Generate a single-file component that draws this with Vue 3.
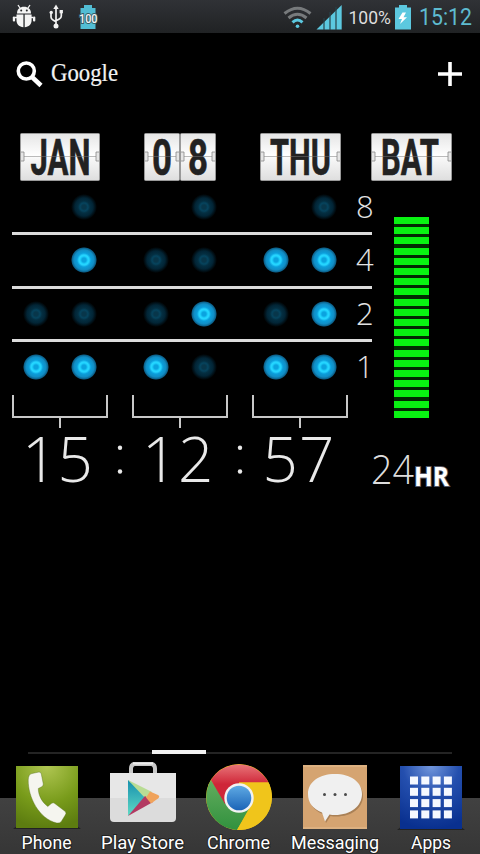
<template>
  <div class="screen">
    <header class="status-bar">
      <svg class="status-icons" width="110" height="33" viewBox="0 0 110 33">
        <g fill="#f4f4f4">
          <path d="M17 13.500c0-4.500 3-6.700 7-6.700s7 2.200 7 6.700z" />
          <path d="M16.500 14.500h6.900v12.800c-4-.3-6.900-3-6.900-7zM24.700 14.500h6.900v5.800c0 4-2.900 6.700-6.900 7z" />
          <rect x="12.800" y="16.500" width="2.300" height="5" rx="1" />
          <rect x="33" y="16.500" width="2.300" height="5" rx="1" />
        </g>
        <path d="M20 8l-2-3M28 8l2-3M15 17.500h3M30 17.500h3" stroke="#f4f4f4" stroke-width="1.300" />
        <circle cx="21.200" cy="10.500" r="1" fill="#26282a" /><circle cx="26.800" cy="10.500" r="1" fill="#26282a" />
        <g fill="none" stroke="#f2f2f2" stroke-width="1.700">
          <path d="M56 8v17M51 13v4q0 2 2 3l3 1.800M61.300 12v4q0 2-2 3l-3.300 1.800" />
        </g>
        <g fill="#f2f2f2">
          <path d="M56 4.500l2.700 4.500h-5.400z" /><circle cx="51.200" cy="12.500" r="1.700" />
          <rect x="59.600" y="10" width="3.300" height="3.300" /><circle cx="56" cy="26" r="2.500" />
        </g>
        <path d="M84 5h8v3h3.500v21h-15V8H84z" fill="#52bdd4" />
        <text x="79" y="22.700" textLength="18.500" lengthAdjust="spacingAndGlyphs" class="tiny">100</text>
      </svg>
      <svg class="status-icons" width="200" height="33" viewBox="280 0 200 33">
        <g fill="none" stroke-width="3">
          <path d="M284.500 13.500q13-10.500 26 0" stroke="#777a7c" />
          <path d="M288.500 18q9-7.500 18 0" stroke="#777a7c" />
          <path d="M292.500 22.300q5-4.500 10 0" stroke="#5cc8df" />
        </g>
        <circle cx="297.500" cy="26.300" r="1.800" fill="#5cc8df" />
        <path d="M316.500 29.500L341.700 5v24.500z" fill="#5cc8df" />
        <path d="M324 18v12M330 12v18M336 7v23" stroke="#27414a" stroke-width="1.200" />
        <text x="348.500" y="23.700" textLength="42.500" lengthAdjust="spacingAndGlyphs" class="percent">100%</text>
        <path d="M399 5h8v2.500h4v22h-16v-22h4z" fill="#5cc8df" />
        <path d="M402.500 12.500l-4 6.500h3.500l-2 5 7-6.700h-3.500l2.500-4.800z" fill="#fff" />
        <text x="419" y="24.800" textLength="53" lengthAdjust="spacingAndGlyphs" class="clock-text">15:12</text>
      </svg>
    </header>

    <div class="search">
      <svg width="120" height="36" viewBox="12 56 120 36">
        <circle cx="26.300" cy="71" r="8" fill="none" stroke="#fff" stroke-width="3.600" />
        <path d="M32 77l9 8.500" stroke="#fff" stroke-width="4.500" />
        <text x="51" y="80.500" textLength="67" lengthAdjust="spacingAndGlyphs" class="google">Google</text>
      </svg>
      <svg width="24" height="24" viewBox="0 0 24 24">
        <path d="M0 12h24M12 0v24" stroke="#fff" stroke-width="3.600" />
      </svg>
    </div>

    <main class="widget">
      <div class="cards">
        <div v-for="card in cards" :key="card.name" class="card" :class="card.name">
          <svg v-for="face in card.faces" :key="face.text" :width="face.width" height="48" :viewBox="`0 0 ${face.width} 48`">
            <defs>
              <linearGradient id="paper" x2="0" y2="1">
                <stop offset="0" stop-color="#e5e5e5" /><stop offset=".48" stop-color="#fff" />
                <stop offset=".52" stop-color="#f8f8f8" /><stop offset="1" stop-color="#dedede" />
              </linearGradient>
            </defs>
            <rect x=".5" y=".5" :width="face.width - 1" height="47" rx="1" fill="url(#paper)" stroke="#999" />
            <text :x="face.x" y="42" :textLength="face.length" lengthAdjust="spacingAndGlyphs" class="flip">{{ face.text }}</text>
            <path :d="`M1 23.500H${face.width - 1}`" stroke="#777" stroke-opacity=".5" />
            <path :d="`M1 19h3v9h-3M${face.width - 1} 19h-3v9h3`" fill="#e5e5e5" stroke="#888" stroke-width=".8" />
          </svg>
        </div>
      </div>

      <div class="body">
        <section class="binary">
          <div v-for="row in rows" :key="row.value" class="row">
            <span v-for="(state, i) in row.dots" :key="i" class="cell">
              <i v-if="state !== '-'" class="dot" :class="{ on: state === '1' }"></i>
            </span>
            <svg class="weight" width="18" height="30" viewBox="0 0 18 30">
              <text x="0" y="26">{{ row.value }}</text>
            </svg>
          </div>

          <div class="brackets">
            <div v-for="n in 3" :key="n" class="bracket"></div>
          </div>
          <svg class="time" width="348" height="64" viewBox="0 427 348 64">
            <text v-for="digit in digits" :key="digit.x" :x="digit.x" y="481.500">{{ digit.text }}</text>
            <g fill="#e8e8e8">
              <circle cx="120" cy="447.700" r="2.200" /><circle cx="120" cy="471.500" r="2.200" />
              <circle cx="240" cy="447.700" r="2.200" /><circle cx="240" cy="471.500" r="2.200" />
            </g>
          </svg>
        </section>

        <section class="battery">
          <div class="bars"><i v-for="n in 20" :key="n"></i></div>
          <svg width="86" height="44" viewBox="370 449 86 44">
            <text x="371" y="483.500" textLength="43" lengthAdjust="spacingAndGlyphs" class="hours">24</text>
            <text x="414" y="485.500" textLength="35" lengthAdjust="spacingAndGlyphs" class="hr">HR</text>
          </svg>
        </section>
      </div>
    </main>

    <div class="pager"><span></span></div>

    <nav class="dock">
      <div class="app">
        <svg width="72" height="70" viewBox="0 0 72 70">
          <defs>
            <radialGradient id="green" cx=".5" cy="0" r="1">
              <stop offset="0" stop-color="#b0c652" /><stop offset=".6" stop-color="#789b1a" /><stop offset="1" stop-color="#5d7d10" />
            </radialGradient>
          </defs>
          <path d="M2 68l5-4h58l5 4z" fill="#222" />
          <rect x="5" y="5" width="62" height="62" fill="url(#green)" />
          <path d="M21 12.500l7-1.500q2 0 2.300 2l2 10q.2 2-2 3l-3 1.500c0 7 4 14 9.500 18l3.500-3q2-1.500 3.500 0l10.500 8q1.500 1.500 0 3.500l-4 6.500q-1.500 2-4.500 1.500C28 58 17 36 17.200 19q.2-6 3.800-6.500z" fill="#f5f5ef" stroke="#526f18" stroke-opacity=".4" />
        </svg>
        <svg class="label" width="96" height="28"><text x="22.500" y="21" textLength="50" lengthAdjust="spacingAndGlyphs">Phone</text></svg>
      </div>
      <div class="app">
        <svg width="72" height="70" viewBox="0 0 72 70">
          <defs>
            <linearGradient id="teal" x2="0" y2="1"><stop offset="0" stop-color="#168fae" /><stop offset="1" stop-color="#61dbc5" /></linearGradient>
          </defs>
          <path d="M24 13V7.500q0-3.500 3-4.500h18q3 1 3 4.500V13" fill="none" stroke="#c8c8c8" stroke-width="4" />
          <path d="M26 2.500h20" stroke="#eee" stroke-width="2" />
          <path d="M3 12h66v45q0 4-4 4H7q-4 0-4-4z" fill="#dcdcdc" />
          <path d="M3 12h66v25H3z" fill="#e7e7e7" />
          <path d="M21 19v36l20-20z" fill="url(#teal)" />
          <path d="M21 19l24 12-6 7z" fill="#b9dc94" />
          <path d="M21 55l25-14-8-6z" fill="#b23a62" />
          <path d="M43 30.500l8 3.500q2.500 1.500 0 3.500l-7 5-5-6z" fill="#f0a35b" />
        </svg>
        <svg class="label" width="96" height="28"><text x="6" y="21" textLength="83" lengthAdjust="spacingAndGlyphs">Play Store</text></svg>
      </div>
      <div class="app">
        <svg width="72" height="70" viewBox="0 0 72 70">
          <defs>
            <linearGradient id="red" x2="0" y2="1"><stop offset="0" stop-color="#e87579" /><stop offset=".5" stop-color="#cf2638" /></linearGradient>
            <linearGradient id="leaf" x2="0" y2="1"><stop offset="0" stop-color="#63ad5e" /><stop offset="1" stop-color="#31913e" /></linearGradient>
            <linearGradient id="blue" x2="0" y2="1"><stop offset="0" stop-color="#5faae4" /><stop offset="1" stop-color="#1b64b7" /></linearGradient>
          </defs>
          <circle cx="36" cy="36" r="33" fill="#f0c51b" />
          <path d="M8 19A33 33 0 0 0 34 69L48 44 36 36 24 43z" fill="url(#leaf)" />
          <path d="M8 19L22 43 36 36V21.500H65.500A33 33 0 0 0 8 19z" fill="url(#red)" />
          <path d="M36 21.500h29.500A33 33 0 0 1 34 69l15-25z" fill="#f0c51b" />
          <circle cx="36" cy="37" r="14.700" fill="#f2f2f2" />
          <circle cx="36" cy="37" r="12.300" fill="url(#blue)" />
        </svg>
        <svg class="label" width="96" height="28"><text x="16" y="21" textLength="63" lengthAdjust="spacingAndGlyphs">Chrome</text></svg>
      </div>
      <div class="app">
        <svg width="72" height="70" viewBox="0 0 72 70">
          <rect x="4" y="4" width="64" height="64" fill="#d5a471" />
          <path d="M4 5h64M4 67h64" stroke="#e4bd91" stroke-width="1" />
          <path d="M36 14c16 0 27 8 27 20S52 54.500 36 54.500q-3 0-5.500-.5L26 61l-3-9Q9.500 47 9.500 34C9.500 22 20 14 36 14z" transform="translate(1 1)" fill="#805d3b" opacity=".5" />
          <path d="M36 13c16 0 27 8 27 20S52 54 36 54q-3 0-5.500-.5L26 60.500l-3-9Q9 46 9 33C9 21 20 13 36 13z" fill="#f0f0f0" />
          <g fill="#4a4a4a"><circle cx="25.500" cy="33.500" r="1.500" /><circle cx="36" cy="33.500" r="1.500" /><circle cx="46.500" cy="33.500" r="1.500" /></g>
        </svg>
        <svg class="label" width="96" height="28"><text x="4" y="21" textLength="88" lengthAdjust="spacingAndGlyphs">Messaging</text></svg>
      </div>
      <div class="app">
        <svg width="72" height="70" viewBox="0 0 72 70">
          <defs>
            <radialGradient id="navy" cx=".5" cy="0" r="1">
              <stop offset="0" stop-color="#7196dc" /><stop offset=".45" stop-color="#244fae" /><stop offset="1" stop-color="#09308f" />
            </radialGradient>
          </defs>
          <path d="M2 69l5-4h58l5 4z" fill="#222" />
          <rect x="5" y="5" width="62" height="63" fill="url(#navy)" />
          <g fill="#f5f8ff">
            <rect v-for="n in 16" :key="n" :x="15 + ((n - 1) % 4) * 11.300" :y="15.500 + Math.floor((n - 1) / 4) * 11.300" width="8" height="8" />
          </g>
        </svg>
        <svg class="label" width="96" height="28"><text x="28" y="21" textLength="40" lengthAdjust="spacingAndGlyphs">Apps</text></svg>
      </div>
    </nav>
  </div>
</template>

<script setup>
const cards = [
  { name: 'month', faces: [{ text: 'JAN', width: 80, x: 10.5, length: 60 }] },
  { name: 'day', faces: [{ text: '0', width: 36, x: 8, length: 20 }, { text: '8', width: 36, x: 8, length: 20 }] },
  { name: 'weekday', faces: [{ text: 'THU', width: 81, x: 10, length: 61 }] },
  { name: 'bat', faces: [{ text: 'BAT', width: 81, x: 10, length: 58 }] },
];

// '-' leaves the position empty, 0 is an unlit dot
const rows = [
  { value: 8, dots: '-0-0-0' },
  { value: 4, dots: '-10011' },
  { value: 2, dots: '000101' },
  { value: 1, dots: '111011' },
];

const digits = [
  { text: '1', x: 22 },
  { text: '5', x: 57.5 },
  { text: '1', x: 142 },
  { text: '2', x: 178 },
  { text: '5', x: 262.5 },
  { text: '7', x: 299 },
];
</script>

<style>
body { background: #000; overflow: hidden; }
</style>

<style scoped>
.screen { width: 480px; height: 854px; display: flex; flex-direction: column; background: #000; font-family: Roboto, sans-serif; overflow: hidden; }
svg { display: block; flex-shrink: 0; overflow: visible; }
.status-bar { height: 33px; display: flex; justify-content: space-between; background: linear-gradient(#303236, #202224); flex-shrink: 0; }
.tiny { font: 500 12px Roboto, sans-serif; fill: #f4f4f4; stroke: #355b64; stroke-width: 2px; paint-order: stroke; }
.percent { font-size: 18.5px; fill: #dedede; }
.clock-text { font-size: 23px; fill: #5ebbd0; }
.search { height: 100px; box-sizing: border-box; padding: 23px 18px 0 12px; display: flex; justify-content: space-between; flex-shrink: 0; }
.search svg:last-child { margin-top: 6px; }
.google { font: 25px "Liberation Serif", serif; fill: #f2f2f2; stroke: #f2f2f2; stroke-width: .2px; }

.widget { height: 367px; flex-shrink: 0; }
.cards { display: flex; padding-left: 20px; height: 48px; }
.card { display: flex; }
.card.day { margin-left: 44px; }
.card.weekday { margin-left: 44px; }
.card.bat { margin-left: 30px; }
.flip { font: bold 50px Roboto, sans-serif; fill: #222; stroke: #222; stroke-width: .6px; }
.body { display: flex; padding: 1px 0 0 12px; }
.binary { width: 361px; }
.row { height: 53.3px; width: 360px; box-sizing: border-box; border-bottom: 3px solid #dcdcdc; display: flex; align-items: center; }
.row:nth-child(4) { border-bottom-color: transparent; }
.cell { width: 48px; flex-shrink: 0; display: flex; justify-content: center; }
.cell:nth-child(2), .cell:nth-child(4) { margin-right: 24px; }
.dot { width: 26px; height: 26px; border-radius: 50%; background: radial-gradient(circle, #08364a 0 2px, #06445e 4px, #042f42 6px, #022536 9px, transparent 13px); }
.dot.on { background: radial-gradient(circle, #0ba3df 0 2px, #20d5ff 4px, #27d5ff 5px, #0b9edb 7px, #118dc4 10px, #0c608a 12px, transparent 13px); }
.weight { margin-left: 8px; }
.weight text { font: 300 31px "Open Sans", sans-serif; fill: #e2e2e2; }
.brackets { display: flex; gap: 24px; height: 32px; }
.bracket { width: 96px; height: 23px; box-sizing: border-box; border: 2px solid #c8c8c8; border-top: 0; }
.bracket::after { content: ''; display: block; width: 2px; height: 10px; margin: 23px auto 0; background: #c8c8c8; }
.time { margin-left: -12px; }
.time text { font: 300 62px "Open Sans", sans-serif; fill: #e9e9e9; }
.battery { width: 107px; display: flex; flex-direction: column; align-items: flex-start; padding-top: 35px; }
.bars { height: 201px; width: 35px; margin-left: 21px; display: flex; flex-direction: column; justify-content: space-between; background: #032b03; }
.bars i { height: 7px; background: #09f312; }
.battery svg { margin: 31px 0 0 -3px; }
.hours { font: 300 41px "Open Sans", sans-serif; fill: #ddd; }
.hr { font: bold 26px "Open Sans", sans-serif; fill: #fff; stroke: #555766; stroke-width: 2px; paint-order: stroke; }

.pager { margin: auto 28px 6.500px; height: 5px; background: linear-gradient(#242424, #242424) 0 2px / 100% 2px no-repeat; }
.pager span { display: block; width: 54px; height: 4px; margin-left: 124px; background: #f2f2f2; }
.dock { height: 93px; display: flex; flex-shrink: 0; margin-left: -1px; background: linear-gradient(transparent 37px, #414141 37px, #363636); }
.app { width: 96px; flex-shrink: 0; display: flex; flex-direction: column; align-items: center; }
.app svg:first-child { height: 70px; }
.label { margin-top: -3px; }
.label text { font-size: 19px; fill: #fff; stroke: #111; stroke-width: 2px; stroke-opacity: .65; paint-order: stroke; }
</style>
